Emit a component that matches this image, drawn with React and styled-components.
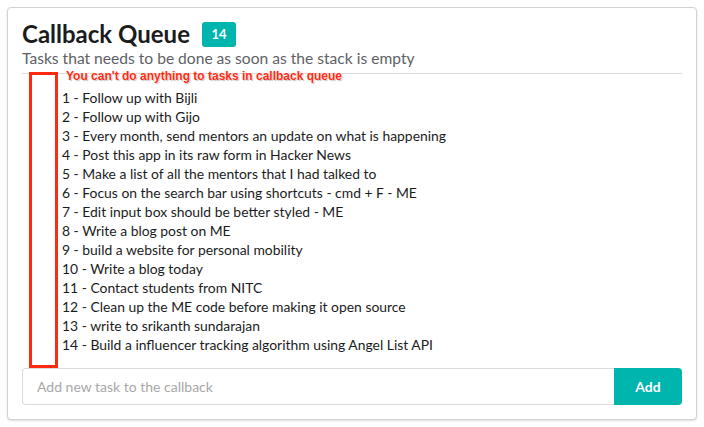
import React from 'react';
import styled, { createGlobalStyle } from 'styled-components';

const GlobalStyle = createGlobalStyle`
  html, body {
    margin: 0;
    padding: 0;
    background: #ffffff;
    font-family: Lato, 'Open Sans', sans-serif;
  }
  * { box-sizing: border-box; }
`;

const Page = styled.div`
  padding: 7px;
  width: 704px;
`;

const Card = styled.div`
  position: relative;
  width: 690px;
  height: 413px;
  border: 1px solid #d4d4d5;
  border-radius: 4px;
  box-shadow: 0 1px 2px rgba(34, 36, 38, 0.15);
  background: #fff;
  padding: 12px 14px 14px 14px;
  display: flex;
  flex-direction: column;
`;

const Header = styled.div`
  display: flex;
  align-items: center;
  gap: 12px;
`;

const Title = styled.h1`
  margin: 0;
  font-size: 24px;
  font-weight: 700;
  line-height: 28px;
  color: #1b1c1d;
`;

const Badge = styled.span`
  display: inline-flex;
  align-items: center;
  justify-content: center;
  width: 34px;
  height: 25px;
  border-radius: 3px;
  background: #00b5ad;
  color: #fff;
  font-size: 13px;
  font-weight: 700;
`;

const Subtitle = styled.div`
  font-size: 15.6px;
  line-height: 20px;
  color: #5e6165;
  padding-bottom: 5px;
  border-bottom: 1px solid #dedede;
`;

const List = styled.ol`
  list-style: none;
  margin: 14px 0 0 0;
  padding: 0 0 0 40px;
`;

const Item = styled.li`
  font-size: 13.9px;
  line-height: 19px;
  color: #1b1c1d;
`;

const Form = styled.div`
  display: flex;
  margin-top: auto;
  height: 37px;
`;

const Input = styled.input`
  flex: 1;
  border: 1px solid #dcdcdc;
  border-right: none;
  border-radius: 4px 0 0 4px;
  padding: 0 14px;
  font-family: Lato, sans-serif;
  font-size: 14px;
  color: #333;
  outline: none;
  &::placeholder { color: #a8a8a8; }
`;

const AddButton = styled.button`
  width: 68px;
  border: none;
  border-radius: 0 4px 4px 0;
  background: #00b5ad;
  color: #fff;
  font-family: Lato, sans-serif;
  font-weight: 700;
  font-size: 14px;
`;

const Highlight = styled.div`
  position: absolute;
  left: 21px;
  top: 64px;
  width: 29px;
  height: 296px;
  border: 3px solid #ff2a12;
`;

const Note = styled.div`
  position: absolute;
  left: 58px;
  top: 61px;
  font-family: 'Liberation Sans', Arial, sans-serif;
  font-weight: 700;
  font-size: 12px;
  color: #ff2a12;
  text-shadow: 0 0 1px #fff, 0 0 1px #fff, 1px 1px 1px rgba(0,0,0,0.25);
  white-space: nowrap;
`;

const tasks = [
  'Follow up with Bijli',
  'Follow up with Gijo',
  'Every month, send mentors an update on what is happening',
  'Post this app in its raw form in Hacker News',
  'Make a list of all the mentors that I had talked to',
  'Focus on the search bar using shortcuts - cmd + F - ME',
  'Edit input box should be better styled - ME',
  'Write a blog post on ME',
  'build a website for personal mobility',
  'Write a blog today',
  'Contact students from NITC',
  'Clean up the ME code before making it open source',
  'write to srikanth sundarajan',
  'Build a influencer tracking algorithm using Angel List API',
];

export default function App() {
  return (
    <Page>
      <GlobalStyle />
      <Card>
        <Header>
          <Title>Callback Queue</Title>
          <Badge>{tasks.length}</Badge>
        </Header>
        <Subtitle>Tasks that needs to be done as soon as the stack is empty</Subtitle>
        <List>
          {tasks.map((t, i) => (
            <Item key={i}>{i + 1} - {t}</Item>
          ))}
        </List>
        <Form>
          <Input placeholder="Add new task to the callback" />
          <AddButton>Add</AddButton>
        </Form>
        <Highlight />
        <Note>You can't do anything to tasks in callback queue</Note>
      </Card>
    </Page>
  );
}
